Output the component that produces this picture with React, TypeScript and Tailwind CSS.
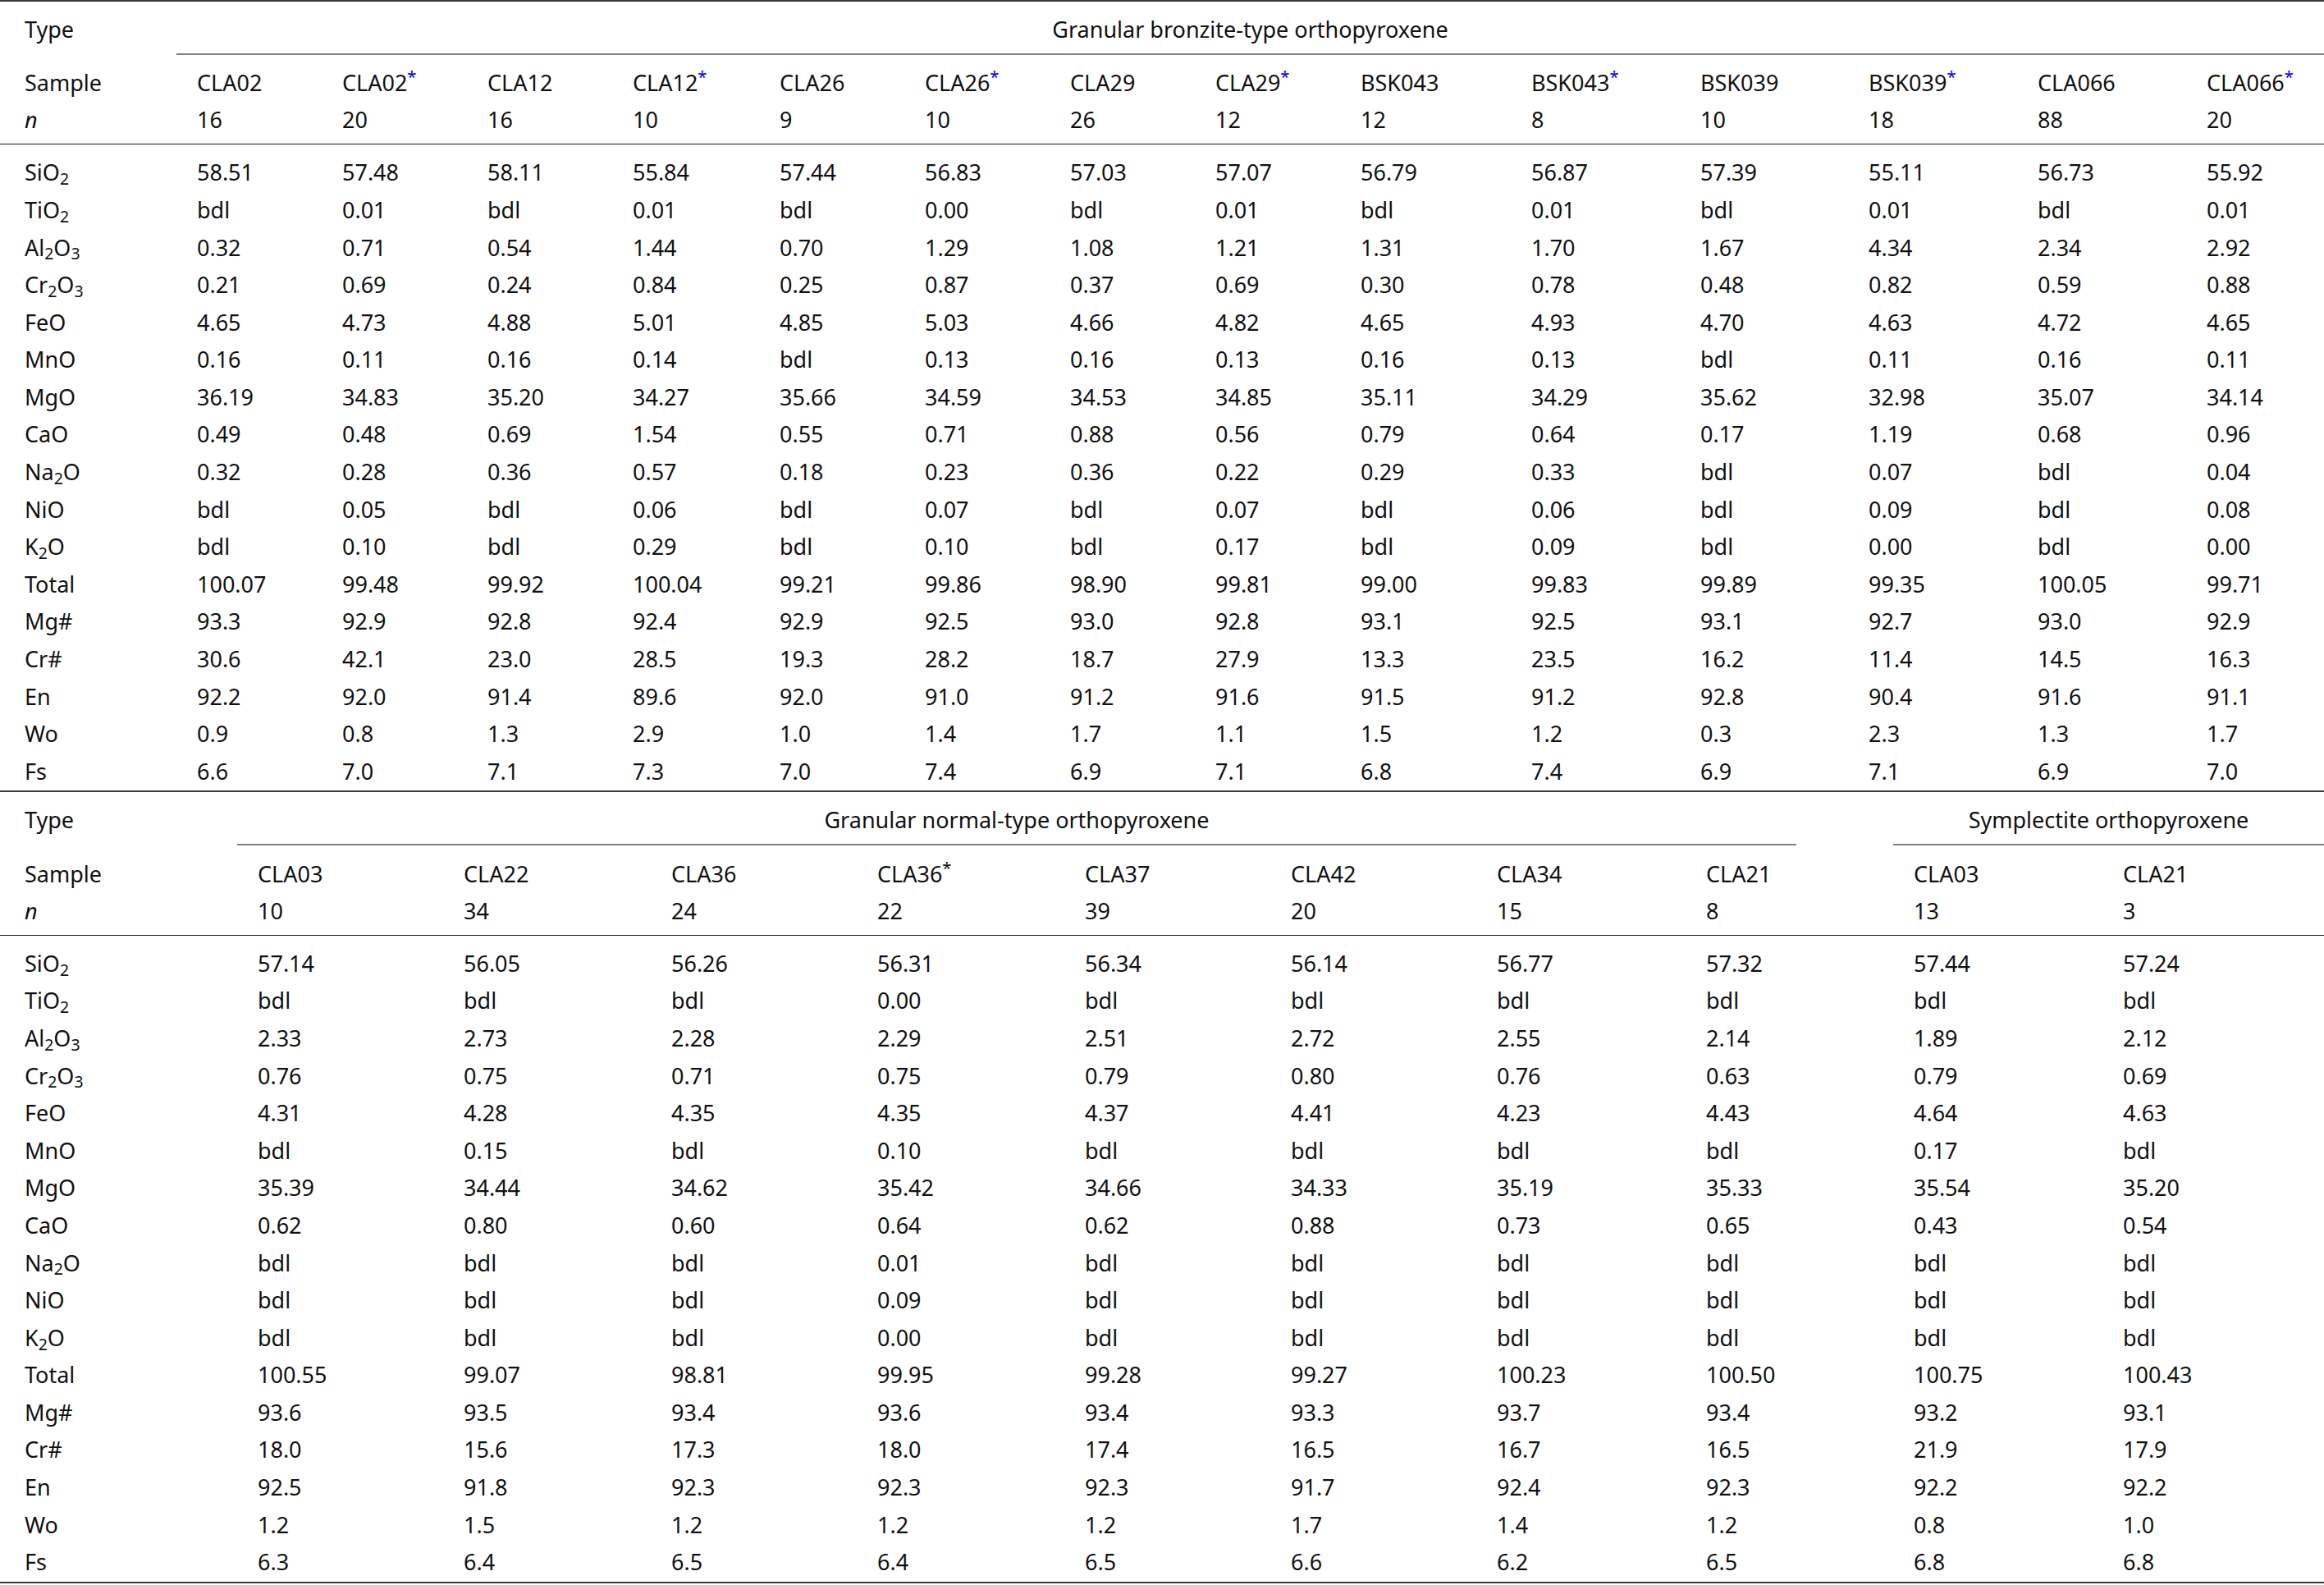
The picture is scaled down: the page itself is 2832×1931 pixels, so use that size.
import React from "react";

type Cell = string;

const T1 =
  "grid grid-cols-[215px_177px_177px_177px_179px_177px_177px_177px_177px_208px_206px_205px_206px_206px_1fr]";
const T2 =
  "grid grid-cols-[289px_251px_253px_251px_253px_251px_251px_255px_135px_118px_255px_1fr]";

const Sub = ({ children }: { children: React.ReactNode }) => (
  <sub className="text-[72%]">{children}</sub>
);

const labels: React.ReactNode[] = [
  <>SiO<Sub>2</Sub></>,
  <>TiO<Sub>2</Sub></>,
  <>Al<Sub>2</Sub>O<Sub>3</Sub></>,
  <>Cr<Sub>2</Sub>O<Sub>3</Sub></>,
  <>FeO</>,
  <>MnO</>,
  <>MgO</>,
  <>CaO</>,
  <>Na<Sub>2</Sub>O</>,
  <>NiO</>,
  <>K<Sub>2</Sub>O</>,
  <>Total</>,
  <>Mg#</>,
  <>Cr#</>,
  <>En</>,
  <>Wo</>,
  <>Fs</>,
];

const t1Samples: { name: string; star: boolean }[] = [
  { name: "CLA02", star: false },
  { name: "CLA02", star: true },
  { name: "CLA12", star: false },
  { name: "CLA12", star: true },
  { name: "CLA26", star: false },
  { name: "CLA26", star: true },
  { name: "CLA29", star: false },
  { name: "CLA29", star: true },
  { name: "BSK043", star: false },
  { name: "BSK043", star: true },
  { name: "BSK039", star: false },
  { name: "BSK039", star: true },
  { name: "CLA066", star: false },
  { name: "CLA066", star: true },
];
const t1N = ["16", "20", "16", "10", "9", "10", "26", "12", "12", "8", "10", "18", "88", "20"];
const t1Data: string[] = [
  "58.51 57.48 58.11 55.84 57.44 56.83 57.03 57.07 56.79 56.87 57.39 55.11 56.73 55.92",
  "bdl 0.01 bdl 0.01 bdl 0.00 bdl 0.01 bdl 0.01 bdl 0.01 bdl 0.01",
  "0.32 0.71 0.54 1.44 0.70 1.29 1.08 1.21 1.31 1.70 1.67 4.34 2.34 2.92",
  "0.21 0.69 0.24 0.84 0.25 0.87 0.37 0.69 0.30 0.78 0.48 0.82 0.59 0.88",
  "4.65 4.73 4.88 5.01 4.85 5.03 4.66 4.82 4.65 4.93 4.70 4.63 4.72 4.65",
  "0.16 0.11 0.16 0.14 bdl 0.13 0.16 0.13 0.16 0.13 bdl 0.11 0.16 0.11",
  "36.19 34.83 35.20 34.27 35.66 34.59 34.53 34.85 35.11 34.29 35.62 32.98 35.07 34.14",
  "0.49 0.48 0.69 1.54 0.55 0.71 0.88 0.56 0.79 0.64 0.17 1.19 0.68 0.96",
  "0.32 0.28 0.36 0.57 0.18 0.23 0.36 0.22 0.29 0.33 bdl 0.07 bdl 0.04",
  "bdl 0.05 bdl 0.06 bdl 0.07 bdl 0.07 bdl 0.06 bdl 0.09 bdl 0.08",
  "bdl 0.10 bdl 0.29 bdl 0.10 bdl 0.17 bdl 0.09 bdl 0.00 bdl 0.00",
  "100.07 99.48 99.92 100.04 99.21 99.86 98.90 99.81 99.00 99.83 99.89 99.35 100.05 99.71",
  "93.3 92.9 92.8 92.4 92.9 92.5 93.0 92.8 93.1 92.5 93.1 92.7 93.0 92.9",
  "30.6 42.1 23.0 28.5 19.3 28.2 18.7 27.9 13.3 23.5 16.2 11.4 14.5 16.3",
  "92.2 92.0 91.4 89.6 92.0 91.0 91.2 91.6 91.5 91.2 92.8 90.4 91.6 91.1",
  "0.9 0.8 1.3 2.9 1.0 1.4 1.7 1.1 1.5 1.2 0.3 2.3 1.3 1.7",
  "6.6 7.0 7.1 7.3 7.0 7.4 6.9 7.1 6.8 7.4 6.9 7.1 6.9 7.0",
];

const t2Samples = ["CLA03", "CLA22", "CLA36", "CLA36*", "CLA37", "CLA42", "CLA34", "CLA21", "", "CLA03", "CLA21"];
const t2N = ["10", "34", "24", "22", "39", "20", "15", "8", "", "13", "3"];
const t2Data: string[] = [
  "57.14 56.05 56.26 56.31 56.34 56.14 56.77 57.32 | 57.44 57.24",
  "bdl bdl bdl 0.00 bdl bdl bdl bdl | bdl bdl",
  "2.33 2.73 2.28 2.29 2.51 2.72 2.55 2.14 | 1.89 2.12",
  "0.76 0.75 0.71 0.75 0.79 0.80 0.76 0.63 | 0.79 0.69",
  "4.31 4.28 4.35 4.35 4.37 4.41 4.23 4.43 | 4.64 4.63",
  "bdl 0.15 bdl 0.10 bdl bdl bdl bdl | 0.17 bdl",
  "35.39 34.44 34.62 35.42 34.66 34.33 35.19 35.33 | 35.54 35.20",
  "0.62 0.80 0.60 0.64 0.62 0.88 0.73 0.65 | 0.43 0.54",
  "bdl bdl bdl 0.01 bdl bdl bdl bdl | bdl bdl",
  "bdl bdl bdl 0.09 bdl bdl bdl bdl | bdl bdl",
  "bdl bdl bdl 0.00 bdl bdl bdl bdl | bdl bdl",
  "100.55 99.07 98.81 99.95 99.28 99.27 100.23 100.50 | 100.75 100.43",
  "93.6 93.5 93.4 93.6 93.4 93.3 93.7 93.4 | 93.2 93.1",
  "18.0 15.6 17.3 18.0 17.4 16.5 16.7 16.5 | 21.9 17.9",
  "92.5 91.8 92.3 92.3 92.3 91.7 92.4 92.3 | 92.2 92.2",
  "1.2 1.5 1.2 1.2 1.2 1.7 1.4 1.2 | 0.8 1.0",
  "6.3 6.4 6.5 6.4 6.5 6.6 6.2 6.5 | 6.8 6.8",
];

const split2 = (s: string): Cell[] => {
  const [a, b] = s.split("|");
  return [...a.trim().split(" "), "", ...b.trim().split(" ")];
};

const LabelCell = ({ children }: { children: React.ReactNode }) => (
  <div className="pl-[30px] whitespace-nowrap">{children}</div>
);
const ValueCell = ({ children }: { children?: React.ReactNode }) => (
  <div className="pl-[25px] whitespace-nowrap">{children}</div>
);

function TopTable() {
  return (
    <div className="border-t-2 border-[#3a3a3a]">
      <div className={`${T1} leading-[45px]`}>
        <div className="pl-[30px] pt-[11px] pb-[6.7px]">Type</div>
        <div className="col-span-14 text-center pt-[11px] pb-[6.7px] border-b-2 border-[#808080]">
          Granular bronzite-type orthopyroxene
        </div>
      </div>
      <div className="pt-[11.8px] pb-[6.75px] border-b-[1.5px] border-[#1a1a1a] leading-[45px]">
        <div className={T1}>
          <LabelCell>Sample</LabelCell>
          {t1Samples.map((s, i) => (
            <ValueCell key={i}>
              {s.name}
              {s.star && <sup className="text-[#0000ee]">*</sup>}
            </ValueCell>
          ))}
        </div>
        <div className={T1}>
          <LabelCell>
            <i>n</i>
          </LabelCell>
          {t1N.map((v, i) => (
            <ValueCell key={i}>{v}</ValueCell>
          ))}
        </div>
      </div>
      <div className="pt-[11.1px] pb-[1px] leading-[45.6px]">
        {t1Data.map((row, r) => (
          <div key={r} className={T1}>
            <LabelCell>{labels[r]}</LabelCell>
            {row.split(" ").map((v, i) => (
              <ValueCell key={i}>{v}</ValueCell>
            ))}
          </div>
        ))}
      </div>
    </div>
  );
}

function BottomTable() {
  return (
    <div className="border-t-2 border-b-2 border-[#3a3a3a]">
      <div className={`${T2} leading-[45px]`}>
        <div className="pl-[30px] pt-[11px] pb-[6.7px]">Type</div>
        <div className="col-span-8 text-center pt-[11px] pb-[6.7px] border-b-2 border-[#808080]">
          Granular normal-type orthopyroxene
        </div>
        <div />
        <div className="col-span-2 text-center pt-[11px] pb-[6.7px] border-b-2 border-[#808080]">
          Symplectite orthopyroxene
        </div>
      </div>
      <div className="pt-[11.8px] pb-[6.75px] border-b-[1.5px] border-[#1a1a1a] leading-[45px]">
        <div className={T2}>
          <LabelCell>Sample</LabelCell>
          {t2Samples.map((s, i) => (
            <ValueCell key={i}>
              {s.endsWith("*") ? (
                <>
                  {s.slice(0, -1)}
                  <sup>*</sup>
                </>
              ) : (
                s
              )}
            </ValueCell>
          ))}
        </div>
        <div className={T2}>
          <LabelCell>
            <i>n</i>
          </LabelCell>
          {t2N.map((v, i) => (
            <ValueCell key={i}>{v}</ValueCell>
          ))}
        </div>
      </div>
      <div className="pt-[11.1px] pb-[1px] leading-[45.6px]">
        {t2Data.map((row, r) => (
          <div key={r} className={T2}>
            <LabelCell>{labels[r]}</LabelCell>
            {split2(row).map((v, i) => (
              <ValueCell key={i}>{v}</ValueCell>
            ))}
          </div>
        ))}
      </div>
    </div>
  );
}

export default function App() {
  return (
    <div className="w-full min-h-screen bg-white text-[#111] text-[27px] font-['Noto_Sans',sans-serif]">
      <TopTable />
      <BottomTable />
    </div>
  );
}
